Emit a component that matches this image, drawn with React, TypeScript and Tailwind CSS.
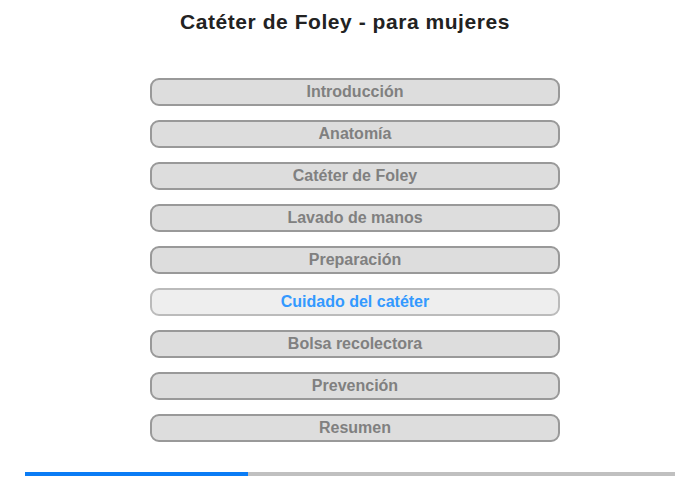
const sections = [
  "Introducción",
  "Anatomía",
  "Catéter de Foley",
  "Lavado de manos",
  "Preparación",
  "Cuidado del catéter",
  "Bolsa recolectora",
  "Prevención",
  "Resumen",
];

const ACTIVE = 5;

export default function App() {
  return (
    <div className="h-[480px] w-[700px] bg-white font-['Liberation_Sans',Arial,sans-serif]">
      <h1 className="w-[690px] pt-[10px] text-center text-[21px] font-bold leading-[24px] tracking-[0.55px] text-[#222222]">
        Catéter de Foley - para mujeres
      </h1>

      <nav className="ml-[150px] mt-[44px] flex w-[410px] flex-col gap-[14px]">
        {sections.map((label, i) => {
          const active = i === ACTIVE;
          return (
            <button
              key={label}
              type="button"
              className={`flex h-[28px] items-center justify-center rounded-[9px] border-2 text-[16px] font-bold leading-none ${
                active
                  ? "border-[#bbbbbb] bg-[#eeeeee] text-[#3399ff]"
                  : "border-[#999999] bg-[#dddddd] text-[#808080]"
              }`}
            >
              {label}
            </button>
          );
        })}
      </nav>

      <div className="ml-[25px] mt-[30px] flex h-[4px] w-[650px] bg-[#c0c0c0]">
        <div className="h-full w-[223px] bg-[#0a7cf5]" />
      </div>
    </div>
  );
}
